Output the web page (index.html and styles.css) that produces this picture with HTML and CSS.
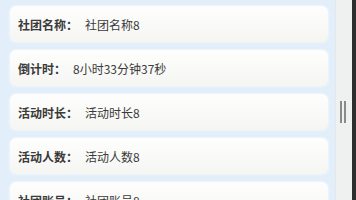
FILE: index.html
```html
<!DOCTYPE html>
<html lang="zh-CN">
  <head>
    <meta charset="UTF-8" />
    <meta name="viewport" content="width=device-width, initial-scale=1.0" />
    <title>社团详情</title>
    <link rel="stylesheet" href="styles.css">
  </head>
  <body>
    <div class="page">
      <div class="list">
        <div class="item"><span class="label">社团名称：</span><span class="value">社团名称8</span></div>
        <div class="item"><span class="label">倒计时：</span><span class="value">8小时33分钟37秒</span></div>
        <div class="item"><span class="label">活动时长：</span><span class="value">活动时长8</span></div>
        <div class="item"><span class="label">活动人数：</span><span class="value">活动人数8</span></div>
        <div class="item"><span class="label">社团账号：</span><span class="value">社团账号8</span></div>
      </div>
      <div class="rail">
        <div class="grip"></div>
      </div>
    </div>
  </body>
</html>
```

FILE: styles.css
```css
body {
  margin: 0;
  background-color: #e2eef9;
  font-family: "Noto Sans CJK SC", "Noto Sans", sans-serif;
  font-size: 12px;
  color: #333;
}
.page {
  display: flex;
  height: 200px;
  overflow: hidden;
}
.list {
  flex: 1;
  display: flex;
  flex-direction: column;
  gap: 8px;
  padding: 6px 7px 0 10px;
}
.item {
  flex: none;
  display: flex;
  align-items: center;
  height: 36px;
  padding-left: 8px;
  border-radius: 6px;
  background: linear-gradient(to bottom, #fefefe, #f5f5f2);
  box-shadow: 0 0 3px rgba(255, 255, 255, 0.9);
}
.label {
  font-weight: bold;
  color: #3a3a3a;
}
.value {
  margin-left: 7px;
  color: #3a3a3a;
}
.rail {
  box-sizing: border-box;
  width: 21px;
  padding-top: 101px;
  background-color: #eff1f1;
  border-left: 1px solid #e4e8ea;
  border-right: 4px solid #2e2e2e;
}
.grip {
  width: 2px;
  height: 22px;
  margin-left: 4px;
  background-color: #8a8a8a;
  box-shadow: 4px 0 0 #8a8a8a;
}
```
